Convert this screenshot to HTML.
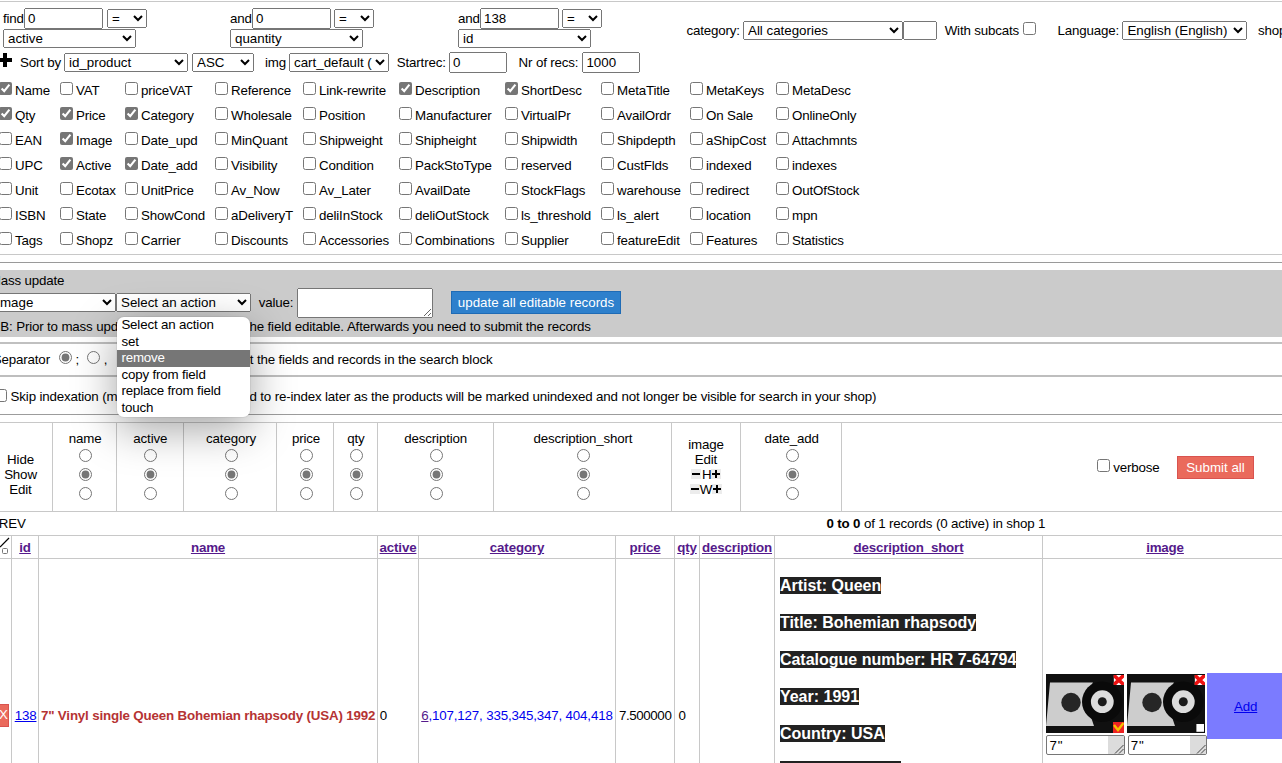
<!DOCTYPE html><html><head><meta charset="utf-8"><style>
html,body{margin:0;padding:0;background:#fff}
body{width:1282px;height:763px;overflow:hidden;position:relative;font-family:"Liberation Sans",sans-serif;font-size:13.333px;color:#000;accent-color:#767676}
.a{position:absolute}
.t{position:absolute;white-space:nowrap;line-height:15px;letter-spacing:-0.16px}
select,input,textarea,button{font-family:"Liberation Sans",sans-serif;font-size:13.333px;margin:0}
select,input[type=text],textarea{position:absolute;box-sizing:border-box}
input[type=checkbox],input[type=radio]{position:absolute;margin:0}
a{color:#0000ee}
.hl{color:#551a8b;font-weight:bold;text-decoration:underline}
.ds{background:#222;color:#fff;font-weight:bold;font-size:16px;line-height:17px;position:absolute;white-space:nowrap}
</style></head><body>
<div class="a" style="left:0px;top:1px;width:1282px;height:1px;background:#c8c8c8"></div>
<div class="t" style="left:3px;top:10.98px;">find</div>
<input type="text" value="0" style="left:24px;top:8px;width:79px;height:21px;">
<select style="left:107px;top:9px;width:40px;height:19px;"><option>=</option></select>
<select style="left:3px;top:29px;width:133px;height:19px;"><option>active</option></select>
<div class="t" style="left:230px;top:10.98px;">and</div>
<input type="text" value="0" style="left:252px;top:8px;width:79px;height:21px;">
<select style="left:334px;top:9px;width:40px;height:19px;"><option>=</option></select>
<select style="left:230px;top:29px;width:133px;height:19px;"><option>quantity</option></select>
<div class="t" style="left:458px;top:10.98px;">and</div>
<input type="text" value="138" style="left:480px;top:8px;width:79px;height:21px;">
<select style="left:562px;top:9px;width:40px;height:19px;"><option>=</option></select>
<select style="left:458px;top:29px;width:133px;height:19px;"><option>id</option></select>
<div class="t" style="left:686.5px;top:22.98px;">category:</div>
<select style="left:743px;top:21px;width:160px;height:19px;"><option>All categories</option></select>
<input type="text" value="" style="left:903px;top:21px;width:34px;height:19px;">
<div class="t" style="left:944.7px;top:22.98px;">With subcats</div>
<input type="checkbox" style="left:1023.3px;top:22px;">
<div class="t" style="left:1057.6px;top:22.98px;">Language:</div>
<select style="left:1122.4px;top:21px;width:124.5px;height:19px;"><option>English (English)</option></select>
<div class="t" style="left:1258px;top:22.98px;">shop</div>
<div class="a" style="left:3px;top:53px;width:4px;height:14px;background:#000"></div>
<div class="a" style="left:-2px;top:58px;width:14px;height:4px;background:#000"></div>
<div class="t" style="left:20px;top:54.98px;">Sort by</div>
<select style="left:64px;top:53px;width:123.5px;height:19px;"><option>id_product</option></select>
<select style="left:192px;top:53px;width:62px;height:19px;"><option>ASC</option></select>
<div class="t" style="left:265px;top:54.98px;">img</div>
<select style="left:289px;top:53px;width:100px;height:19px;"><option>cart_default (80x80)</option></select>
<div class="t" style="left:396.8px;top:54.98px;">Startrec:</div>
<input type="text" value="0" style="left:449px;top:52px;width:58px;height:21px;">
<div class="t" style="left:518.6px;top:54.98px;">Nr of recs:</div>
<input type="text" value="1000" style="left:582.4px;top:52px;width:57.2px;height:21px;">
<input type="checkbox" checked style="left:-1px;top:82px;">
<div class="t" style="left:15px;top:82.98px;">Name</div>
<input type="checkbox" checked style="left:-1px;top:107px;">
<div class="t" style="left:15px;top:107.98px;">Qty</div>
<input type="checkbox" style="left:-1px;top:132px;">
<div class="t" style="left:15px;top:132.98px;">EAN</div>
<input type="checkbox" style="left:-1px;top:157px;">
<div class="t" style="left:15px;top:157.98px;">UPC</div>
<input type="checkbox" style="left:-1px;top:182px;">
<div class="t" style="left:15px;top:182.98px;">Unit</div>
<input type="checkbox" style="left:-1px;top:207px;">
<div class="t" style="left:15px;top:207.98px;">ISBN</div>
<input type="checkbox" style="left:-1px;top:232px;">
<div class="t" style="left:15px;top:232.98px;">Tags</div>
<input type="checkbox" style="left:60px;top:82px;">
<div class="t" style="left:76px;top:82.98px;">VAT</div>
<input type="checkbox" checked style="left:60px;top:107px;">
<div class="t" style="left:76px;top:107.98px;">Price</div>
<input type="checkbox" checked style="left:60px;top:132px;">
<div class="t" style="left:76px;top:132.98px;">Image</div>
<input type="checkbox" checked style="left:60px;top:157px;">
<div class="t" style="left:76px;top:157.98px;">Active</div>
<input type="checkbox" style="left:60px;top:182px;">
<div class="t" style="left:76px;top:182.98px;">Ecotax</div>
<input type="checkbox" style="left:60px;top:207px;">
<div class="t" style="left:76px;top:207.98px;">State</div>
<input type="checkbox" style="left:60px;top:232px;">
<div class="t" style="left:76px;top:232.98px;">Shopz</div>
<input type="checkbox" style="left:125px;top:82px;">
<div class="t" style="left:141px;top:82.98px;">priceVAT</div>
<input type="checkbox" checked style="left:125px;top:107px;">
<div class="t" style="left:141px;top:107.98px;">Category</div>
<input type="checkbox" style="left:125px;top:132px;">
<div class="t" style="left:141px;top:132.98px;">Date_upd</div>
<input type="checkbox" checked style="left:125px;top:157px;">
<div class="t" style="left:141px;top:157.98px;">Date_add</div>
<input type="checkbox" style="left:125px;top:182px;">
<div class="t" style="left:141px;top:182.98px;">UnitPrice</div>
<input type="checkbox" style="left:125px;top:207px;">
<div class="t" style="left:141px;top:207.98px;">ShowCond</div>
<input type="checkbox" style="left:125px;top:232px;">
<div class="t" style="left:141px;top:232.98px;">Carrier</div>
<input type="checkbox" style="left:215px;top:82px;">
<div class="t" style="left:231px;top:82.98px;">Reference</div>
<input type="checkbox" style="left:215px;top:107px;">
<div class="t" style="left:231px;top:107.98px;">Wholesale</div>
<input type="checkbox" style="left:215px;top:132px;">
<div class="t" style="left:231px;top:132.98px;">MinQuant</div>
<input type="checkbox" style="left:215px;top:157px;">
<div class="t" style="left:231px;top:157.98px;">Visibility</div>
<input type="checkbox" style="left:215px;top:182px;">
<div class="t" style="left:231px;top:182.98px;">Av_Now</div>
<input type="checkbox" style="left:215px;top:207px;">
<div class="t" style="left:231px;top:207.98px;">aDeliveryT</div>
<input type="checkbox" style="left:215px;top:232px;">
<div class="t" style="left:231px;top:232.98px;">Discounts</div>
<input type="checkbox" style="left:303px;top:82px;">
<div class="t" style="left:319px;top:82.98px;">Link-rewrite</div>
<input type="checkbox" style="left:303px;top:107px;">
<div class="t" style="left:319px;top:107.98px;">Position</div>
<input type="checkbox" style="left:303px;top:132px;">
<div class="t" style="left:319px;top:132.98px;">Shipweight</div>
<input type="checkbox" style="left:303px;top:157px;">
<div class="t" style="left:319px;top:157.98px;">Condition</div>
<input type="checkbox" style="left:303px;top:182px;">
<div class="t" style="left:319px;top:182.98px;">Av_Later</div>
<input type="checkbox" style="left:303px;top:207px;">
<div class="t" style="left:319px;top:207.98px;">deliInStock</div>
<input type="checkbox" style="left:303px;top:232px;">
<div class="t" style="left:319px;top:232.98px;">Accessories</div>
<input type="checkbox" checked style="left:399px;top:82px;">
<div class="t" style="left:415px;top:82.98px;">Description</div>
<input type="checkbox" style="left:399px;top:107px;">
<div class="t" style="left:415px;top:107.98px;">Manufacturer</div>
<input type="checkbox" style="left:399px;top:132px;">
<div class="t" style="left:415px;top:132.98px;">Shipheight</div>
<input type="checkbox" style="left:399px;top:157px;">
<div class="t" style="left:415px;top:157.98px;">PackStoType</div>
<input type="checkbox" style="left:399px;top:182px;">
<div class="t" style="left:415px;top:182.98px;">AvailDate</div>
<input type="checkbox" style="left:399px;top:207px;">
<div class="t" style="left:415px;top:207.98px;">deliOutStock</div>
<input type="checkbox" style="left:399px;top:232px;">
<div class="t" style="left:415px;top:232.98px;">Combinations</div>
<input type="checkbox" checked style="left:505px;top:82px;">
<div class="t" style="left:521px;top:82.98px;">ShortDesc</div>
<input type="checkbox" style="left:505px;top:107px;">
<div class="t" style="left:521px;top:107.98px;">VirtualPr</div>
<input type="checkbox" style="left:505px;top:132px;">
<div class="t" style="left:521px;top:132.98px;">Shipwidth</div>
<input type="checkbox" style="left:505px;top:157px;">
<div class="t" style="left:521px;top:157.98px;">reserved</div>
<input type="checkbox" style="left:505px;top:182px;">
<div class="t" style="left:521px;top:182.98px;">StockFlags</div>
<input type="checkbox" style="left:505px;top:207px;">
<div class="t" style="left:521px;top:207.98px;">ls_threshold</div>
<input type="checkbox" style="left:505px;top:232px;">
<div class="t" style="left:521px;top:232.98px;">Supplier</div>
<input type="checkbox" style="left:601px;top:82px;">
<div class="t" style="left:617px;top:82.98px;">MetaTitle</div>
<input type="checkbox" style="left:601px;top:107px;">
<div class="t" style="left:617px;top:107.98px;">AvailOrdr</div>
<input type="checkbox" style="left:601px;top:132px;">
<div class="t" style="left:617px;top:132.98px;">Shipdepth</div>
<input type="checkbox" style="left:601px;top:157px;">
<div class="t" style="left:617px;top:157.98px;">CustFlds</div>
<input type="checkbox" style="left:601px;top:182px;">
<div class="t" style="left:617px;top:182.98px;">warehouse</div>
<input type="checkbox" style="left:601px;top:207px;">
<div class="t" style="left:617px;top:207.98px;">ls_alert</div>
<input type="checkbox" style="left:601px;top:232px;">
<div class="t" style="left:617px;top:232.98px;">featureEdit</div>
<input type="checkbox" style="left:690px;top:82px;">
<div class="t" style="left:706px;top:82.98px;">MetaKeys</div>
<input type="checkbox" style="left:690px;top:107px;">
<div class="t" style="left:706px;top:107.98px;">On Sale</div>
<input type="checkbox" style="left:690px;top:132px;">
<div class="t" style="left:706px;top:132.98px;">aShipCost</div>
<input type="checkbox" style="left:690px;top:157px;">
<div class="t" style="left:706px;top:157.98px;">indexed</div>
<input type="checkbox" style="left:690px;top:182px;">
<div class="t" style="left:706px;top:182.98px;">redirect</div>
<input type="checkbox" style="left:690px;top:207px;">
<div class="t" style="left:706px;top:207.98px;">location</div>
<input type="checkbox" style="left:690px;top:232px;">
<div class="t" style="left:706px;top:232.98px;">Features</div>
<input type="checkbox" style="left:776px;top:82px;">
<div class="t" style="left:792px;top:82.98px;">MetaDesc</div>
<input type="checkbox" style="left:776px;top:107px;">
<div class="t" style="left:792px;top:107.98px;">OnlineOnly</div>
<input type="checkbox" style="left:776px;top:132px;">
<div class="t" style="left:792px;top:132.98px;">Attachmnts</div>
<input type="checkbox" style="left:776px;top:157px;">
<div class="t" style="left:792px;top:157.98px;">indexes</div>
<input type="checkbox" style="left:776px;top:182px;">
<div class="t" style="left:792px;top:182.98px;">OutOfStock</div>
<input type="checkbox" style="left:776px;top:207px;">
<div class="t" style="left:792px;top:207.98px;">mpn</div>
<input type="checkbox" style="left:776px;top:232px;">
<div class="t" style="left:792px;top:232.98px;">Statistics</div>
<div class="a" style="left:0px;top:254px;width:1282px;height:1px;background:#c8c8c8"></div>
<div class="a" style="left:0px;top:262px;width:1282px;height:1px;background:#9a9a9a"></div>
<div class="a" style="left:0px;top:270px;width:1282px;height:67px;background:#cbcbcb"></div>
<div class="t" style="left:-10.2px;top:272.98px;">Mass update</div>
<select style="left:-8px;top:293px;width:124px;height:19px;"><option>image</option></select>
<select style="left:116px;top:293px;width:134.5px;height:19px;"><option>Select an action</option></select>
<div class="t" style="left:258.7px;top:294.98px;">value:</div>
<textarea style="left:297px;top:288px;width:136px;height:30px;"></textarea>
<div class="a" style="left:451px;top:291px;width:170px;height:23px;box-sizing:border-box;border:1px solid #1f6bb5;background:#2e80cc;color:#fff;line-height:21px;text-align:center;white-space:nowrap">update all editable records</div>
<div class="t" style="left:-9.1px;top:318.98px;">NB: Prior to mass upd</div>
<div class="t" style="left:346.9px;top:318.98px;">Afterwards you need to submit the records</div>
<div class="t" style="left:249.5px;top:318.98px;">he field editable.</div>
<div class="a" style="left:0px;top:342px;width:1282px;height:2px;background:#c0c0c0"></div>
<div class="t" style="left:-7.2px;top:351.98px;">Separator</div>
<input type="radio" name="sep" checked style="left:59px;top:351px">
<div class="t" style="left:75.5px;top:351.98px;">;</div>
<input type="radio" name="sep" style="left:86.7px;top:351px">
<div class="t" style="left:103.8px;top:351.98px;">,</div>
<div class="t" style="left:249.8px;top:351.98px;">t the fields and records in the search block</div>
<div class="a" style="left:0px;top:375px;width:1282px;height:2px;background:#bebebe"></div>
<input type="checkbox" style="left:-6.5px;top:388.5px;">
<div class="t" style="left:10.6px;top:388.98px;">Skip indexation (m</div>
<div class="t" style="left:249.5px;top:388.98px;">d to re-index later as the products will be marked unindexed and not longer be visible for search in your shop)</div>
<div class="a" style="left:0px;top:414px;width:1282px;height:1px;background:#9c9c9c"></div>
<div class="a" style="left:0px;top:422px;width:1282px;height:1px;background:#c8c8c8"></div>
<div class="a" style="left:0px;top:511px;width:1282px;height:1px;background:#c8c8c8"></div>
<div class="a" style="left:52px;top:422px;width:1px;height:90px;background:#c8c8c8"></div>
<div class="a" style="left:116px;top:422px;width:1px;height:90px;background:#c8c8c8"></div>
<div class="a" style="left:183px;top:422px;width:1px;height:90px;background:#c8c8c8"></div>
<div class="a" style="left:276px;top:422px;width:1px;height:90px;background:#c8c8c8"></div>
<div class="a" style="left:333px;top:422px;width:1px;height:90px;background:#c8c8c8"></div>
<div class="a" style="left:377px;top:422px;width:1px;height:90px;background:#c8c8c8"></div>
<div class="a" style="left:493px;top:422px;width:1px;height:90px;background:#c8c8c8"></div>
<div class="a" style="left:671px;top:422px;width:1px;height:90px;background:#c8c8c8"></div>
<div class="a" style="left:740px;top:422px;width:1px;height:90px;background:#c8c8c8"></div>
<div class="a" style="left:841px;top:422px;width:1px;height:90px;background:#c8c8c8"></div>
<div class="t" style="left:0;width:41px;text-align:center;top:451.60px">Hide</div>
<div class="t" style="left:0;width:41px;text-align:center;top:466.60px">Show</div>
<div class="t" style="left:0;width:41px;text-align:center;top:481.60px">Edit</div>
<div class="t" style="left:-14.799999999999997px;width:200px;text-align:center;top:431.00px">name</div>
<input type="radio" name="rr0" style="left:78.7px;top:449px">
<input type="radio" name="rr0" checked style="left:78.7px;top:468px">
<input type="radio" name="rr0" style="left:78.7px;top:487px">
<div class="t" style="left:50.30000000000001px;width:200px;text-align:center;top:431.00px">active</div>
<input type="radio" name="rr1" style="left:143.8px;top:449px">
<input type="radio" name="rr1" checked style="left:143.8px;top:468px">
<input type="radio" name="rr1" style="left:143.8px;top:487px">
<div class="t" style="left:131px;width:200px;text-align:center;top:431.00px">category</div>
<input type="radio" name="rr2" style="left:224.5px;top:449px">
<input type="radio" name="rr2" checked style="left:224.5px;top:468px">
<input type="radio" name="rr2" style="left:224.5px;top:487px">
<div class="t" style="left:206px;width:200px;text-align:center;top:431.00px">price</div>
<input type="radio" name="rr3" style="left:299.5px;top:449px">
<input type="radio" name="rr3" checked style="left:299.5px;top:468px">
<input type="radio" name="rr3" style="left:299.5px;top:487px">
<div class="t" style="left:255.89999999999998px;width:200px;text-align:center;top:431.00px">qty</div>
<input type="radio" name="rr4" style="left:350.0px;top:449px">
<input type="radio" name="rr4" checked style="left:350.0px;top:468px">
<input type="radio" name="rr4" style="left:350.0px;top:487px">
<div class="t" style="left:335.7px;width:200px;text-align:center;top:431.00px">description</div>
<input type="radio" name="rr5" style="left:430.0px;top:449px">
<input type="radio" name="rr5" checked style="left:430.0px;top:468px">
<input type="radio" name="rr5" style="left:430.0px;top:487px">
<div class="t" style="left:483px;width:200px;text-align:center;top:431.00px">description_short</div>
<input type="radio" name="rr6" style="left:576.5px;top:449px">
<input type="radio" name="rr6" checked style="left:576.5px;top:468px">
<input type="radio" name="rr6" style="left:576.5px;top:487px">
<div class="t" style="left:691.6px;width:200px;text-align:center;top:431.00px">date_add</div>
<input type="radio" name="rr7" style="left:786.0px;top:449px">
<input type="radio" name="rr7" checked style="left:786.0px;top:468px">
<input type="radio" name="rr7" style="left:786.0px;top:487px">
<div class="t" style="left:606px;width:200px;text-align:center;top:436.60px">image</div>
<div class="t" style="left:606px;width:200px;text-align:center;top:451.90px">Edit</div>
<div class="a" style="left:691px;top:469px;width:9.8px;height:10px;background:#ececec"></div>
<div class="a" style="left:692px;top:473px;width:8px;height:2px;background:#000"></div>
<div class="a" style="left:711.2px;top:469px;width:9.5px;height:10px;background:#ececec"></div>
<div class="a" style="left:712.2px;top:473px;width:7.5px;height:2px;background:#000"></div>
<div class="a" style="left:715px;top:470px;width:2px;height:8px;background:#000"></div>
<div class="t" style="left:702px;top:466.98px;letter-spacing:0">H</div>
<div class="a" style="left:690.2px;top:484px;width:9.6px;height:10px;background:#ececec"></div>
<div class="a" style="left:691px;top:488px;width:8px;height:2px;background:#000"></div>
<div class="a" style="left:712.2px;top:484px;width:9.6px;height:10px;background:#ececec"></div>
<div class="a" style="left:713.2px;top:488px;width:7.5px;height:2px;background:#000"></div>
<div class="a" style="left:716px;top:485px;width:2px;height:8px;background:#000"></div>
<div class="t" style="left:699.8px;top:481.98px;letter-spacing:0">W</div>
<input type="checkbox" style="left:1097px;top:459px;">
<div class="t" style="left:1113.2px;top:459.98px;">verbose</div>
<div class="a" style="left:1177px;top:456px;width:77px;height:23px;box-sizing:border-box;background:#ea6a5c;border:1px solid #d9534f;color:#fff;line-height:21px;text-align:center;white-space:nowrap">Submit all</div>
<div class="t" style="left:-1.2px;top:515.98px;">REV</div>
<div class="t" style="left:826.5px;top:515.98px;"><b>0 to 0</b> of 1 records (0 active) in shop 1</div>
<div class="a" style="left:0px;top:535px;width:1282px;height:1px;background:#c8c8c8"></div>
<div class="a" style="left:0px;top:558px;width:1282px;height:1px;background:#c8c8c8"></div>
<div class="a" style="left:11px;top:535px;width:1px;height:230px;background:#c8c8c8"></div>
<div class="a" style="left:38px;top:535px;width:1px;height:230px;background:#c8c8c8"></div>
<div class="a" style="left:377px;top:535px;width:1px;height:230px;background:#c8c8c8"></div>
<div class="a" style="left:418px;top:535px;width:1px;height:230px;background:#c8c8c8"></div>
<div class="a" style="left:615px;top:535px;width:1px;height:230px;background:#c8c8c8"></div>
<div class="a" style="left:674px;top:535px;width:1px;height:230px;background:#c8c8c8"></div>
<div class="a" style="left:699px;top:535px;width:1px;height:230px;background:#c8c8c8"></div>
<div class="a" style="left:774px;top:535px;width:1px;height:230px;background:#c8c8c8"></div>
<div class="a" style="left:1042px;top:535px;width:1px;height:230px;background:#c8c8c8"></div>
<svg class="a" style="left:0;top:536px" width="11" height="22"><line x1="0" y1="11" x2="9" y2="2" stroke="#000" stroke-width="1.2"/><rect x="2.5" y="12.5" width="5" height="5" rx="1" fill="none" stroke="#777" stroke-width="1"/></svg>
<div class="t" style="left:12px;width:26px;text-align:center;top:539.70px"><span class="hl">id</span></div>
<div class="t" style="left:39px;width:338px;text-align:center;top:539.70px"><span class="hl">name</span></div>
<div class="t" style="left:378px;width:40px;text-align:center;top:539.70px"><span class="hl">active</span></div>
<div class="t" style="left:419px;width:196px;text-align:center;top:539.70px"><span class="hl">category</span></div>
<div class="t" style="left:616px;width:58px;text-align:center;top:539.70px"><span class="hl">price</span></div>
<div class="t" style="left:675px;width:24px;text-align:center;top:539.70px"><span class="hl">qty</span></div>
<div class="t" style="left:700px;width:74px;text-align:center;top:539.70px"><span class="hl">description</span></div>
<div class="t" style="left:775px;width:267px;text-align:center;top:539.70px"><span class="hl">description_short</span></div>
<div class="t" style="left:1043px;width:244px;text-align:center;top:539.70px"><span class="hl">image</span></div>
<div class="a" style="left:-12px;top:704.2px;width:21px;height:22.5px;box-sizing:border-box;background:#ea6a5c;border:1px solid #d9534f;color:#fff;line-height:20px;text-align:right;padding-right:0px;white-space:nowrap;font-size:13.333px">X</div>
<div class="t" style="left:14.7px;top:707.98px;"><span style="color:#0000ee;text-decoration:underline">138</span></div>
<div class="t" style="left:40.9px;top:707.98px;font-weight:bold;color:#b53333">7" Vinyl single Queen Bohemian rhapsody (USA) 1992</div>
<div class="t" style="left:379.8px;top:707.98px;">0</div>
<div class="t" style="left:421.2px;top:707.98px;"><span style="color:#551a8b;text-decoration:underline">6</span><span style="color:#0000ee">,107,127, 335,345,347, 404,418</span></div>
<div class="t" style="left:619px;top:707.98px;letter-spacing:-0.4px">7.500000</div>
<div class="t" style="left:678.4px;top:707.98px;">0</div>
<div class="ds" style="left:779.9px;top:576.7px">Artist: Queen</div>
<div class="ds" style="left:779.9px;top:613.8px">Title: Bohemian rhapsody</div>
<div class="ds" style="left:779.9px;top:651.1px">Catalogue number: HR 7-64794</div>
<div class="ds" style="left:779.9px;top:688.2px">Year: 1991</div>
<div class="ds" style="left:779.9px;top:725.4px">Country: USA</div>
<div class="a" style="left:780px;top:761px;width:121px;height:3px;background:#222"></div>
<svg class="a" style="left:1046.2px;top:674px" width="78" height="59" viewBox="0 0 78 59">
<rect width="78" height="59" fill="#101010"/>
<path d="M4 8.6 L47 8.6 L38 22 L48 52 L0 52 Z" fill="#cdcdcd"/>
<circle cx="25" cy="28.5" r="9.7" fill="#262626"/>
<circle cx="56.3" cy="27.7" r="20.3" fill="#0a0a0a"/>
<circle cx="56.3" cy="27.7" r="11.4" fill="#dcdcdc"/>
<circle cx="56.3" cy="27.7" r="4.5" fill="#1a1a1a"/>
<svg x="67.6" y="1" width="10.4" height="10" viewBox="0 0 10.4 10"><rect width="10.4" height="10" fill="#fff"/><path d="M0 0 L10.4 10 M10.4 0 L0 10" stroke="#ee1111" stroke-width="3.6"/></svg>
<rect x="67" y="48" width="11" height="11" fill="#e22"/><path d="M68 51 L72 56 L77.5 49" stroke="#f6c000" stroke-width="2.4" fill="none"/></svg>
<svg class="a" style="left:1127.1px;top:674px" width="78" height="59" viewBox="0 0 78 59">
<rect width="78" height="59" fill="#101010"/>
<path d="M4 8.6 L47 8.6 L38 22 L48 52 L0 52 Z" fill="#cdcdcd"/>
<circle cx="25" cy="28.5" r="9.7" fill="#262626"/>
<circle cx="56.3" cy="27.7" r="20.3" fill="#0a0a0a"/>
<circle cx="56.3" cy="27.7" r="11.4" fill="#dcdcdc"/>
<circle cx="56.3" cy="27.7" r="4.5" fill="#1a1a1a"/>
<svg x="67.6" y="1" width="10.4" height="10" viewBox="0 0 10.4 10"><rect width="10.4" height="10" fill="#fff"/><path d="M0 0 L10.4 10 M10.4 0 L0 10" stroke="#ee1111" stroke-width="3.6"/></svg>
<rect x="69.4" y="50" width="7.6" height="7.8" fill="#fff"/></svg>
<div class="a" style="left:1046.4px;top:735px;width:79px;height:20px;box-sizing:border-box;border:1px solid #767676;border-radius:2px;background:#fff;overflow:hidden"><div class="t" style="left:2px;top:2px;letter-spacing:1px">7"</div><div class="a" style="right:0;top:0;width:16px;height:18px;background:#dcdcdc"></div><svg class="a" style="right:0;bottom:0" width="11" height="11"><path d="M10.5 2 L2 10.5 M10.5 6 L6 10.5" stroke="#444" stroke-width="1"/></svg></div>
<div class="a" style="left:1127.7px;top:735px;width:79px;height:20px;box-sizing:border-box;border:1px solid #767676;border-radius:2px;background:#fff;overflow:hidden"><div class="t" style="left:2px;top:2px;letter-spacing:1px">7"</div><div class="a" style="right:0;top:0;width:16px;height:18px;background:#dcdcdc"></div><svg class="a" style="right:0;bottom:0" width="11" height="11"><path d="M10.5 2 L2 10.5 M10.5 6 L6 10.5" stroke="#444" stroke-width="1"/></svg></div>
<div class="a" style="left:1207.1px;top:673px;width:80px;height:66px;background:#7b7bff"></div>
<div class="t" style="left:1234px;top:698.98px;"><span style="color:#0000ee;text-decoration:underline">Add</span></div>
<div class="a" style="left:117px;top:317px;width:133px;height:100px;background:#fff;border-radius:7px;box-shadow:0 0 0 1px rgba(0,0,0,.05),0 12px 44px rgba(0,0,0,.36);overflow:hidden">
<div class="a" style="left:0;top:0.00px;width:133px;height:16.67px;"></div>
<div class="t" style="left:4.4px;top:-0.02px;">Select an action</div>
<div class="a" style="left:0;top:16.67px;width:133px;height:16.67px;"></div>
<div class="t" style="left:4.4px;top:16.98px;">set</div>
<div class="a" style="left:0;top:33.33px;width:133px;height:16.67px;background:#767676;color:#fff;"></div>
<div class="t" style="left:4.4px;top:32.98px;color:#fff;">remove</div>
<div class="a" style="left:0;top:50.00px;width:133px;height:16.67px;"></div>
<div class="t" style="left:4.4px;top:49.98px;">copy from field</div>
<div class="a" style="left:0;top:66.67px;width:133px;height:16.67px;"></div>
<div class="t" style="left:4.4px;top:65.98px;">replace from field</div>
<div class="a" style="left:0;top:83.34px;width:133px;height:16.67px;"></div>
<div class="t" style="left:4.4px;top:82.98px;">touch</div>
</div>
</body></html>
